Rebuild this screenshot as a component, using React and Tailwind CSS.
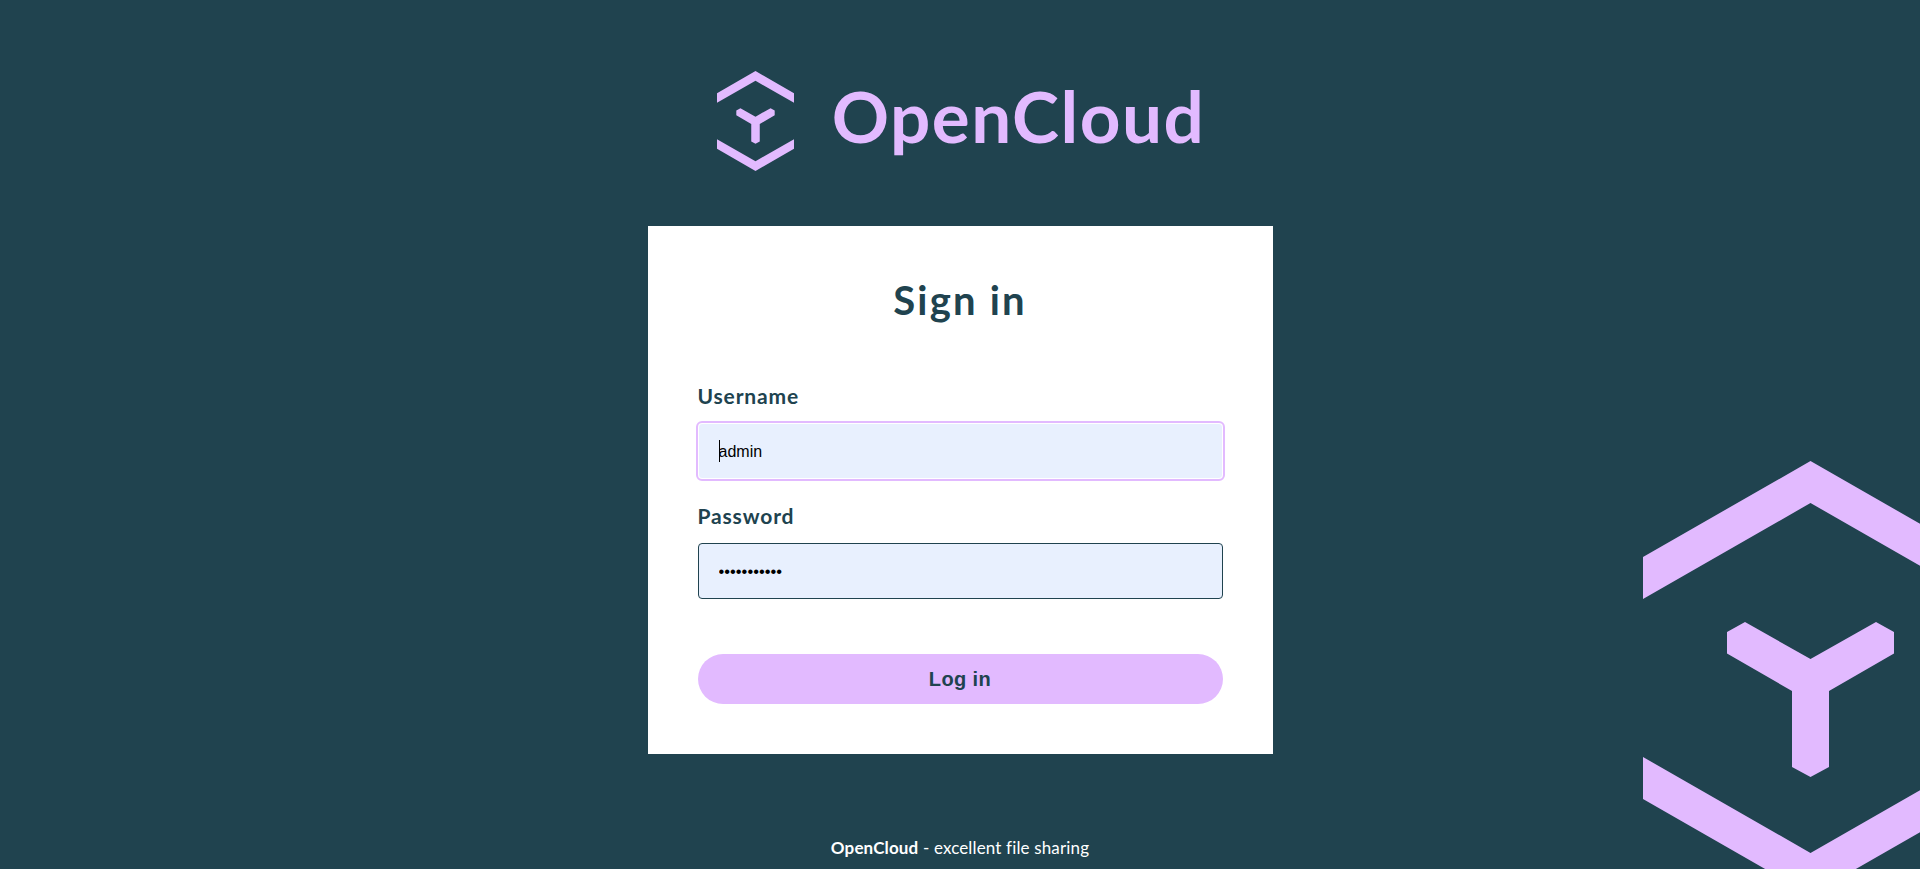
const LogoMark = ({ className }) => (
  <svg viewBox="0 0 335 434" className={className} fill="#e2baff">
    <polygon points="0,96 167.5,0 335,96 335,138 167.5,42 0,138" />
    <polygon points="84,171 102,161 167.5,198 233,161 251,171 251,192.5 186,230 186,306 167.5,316 149,306 149,230 84,192.5" />
    <polygon points="0,296 167.5,392 335,296 335,338 167.5,434 0,338" />
  </svg>
);

const labelClass = "block font-['Lato',sans-serif] font-bold text-[21px] leading-[24px] tracking-[0.85px] text-[#20434f]";

export default function App() {
  return (
    <div className="relative h-screen overflow-hidden bg-[#20434f] pt-[71px]">
      {/* big logo in the corner */}
      <LogoMark className="absolute left-[1643px] top-[461px] w-[335px] h-[434px]" />

      <div className="relative flex flex-col items-center">
        <div className="flex items-center gap-[38px] h-[100px] pl-[2px]">
          <LogoMark className="w-[77px] h-[100px]" />
          <span className="mb-[12px] font-['Lato',sans-serif] font-bold text-[71px] leading-none tracking-[1.5px] text-[#e2baff]">OpenCloud</span>
        </div>

        <div className="mt-[55px] w-[625px] h-[528px] bg-white px-[50px] pt-[49px]">
          <h1 className="text-center font-['Lato',sans-serif] font-bold text-[40px] leading-[50px] tracking-[2.2px] text-[#20434f]">Sign in</h1>

          <label className={labelClass + " mt-[59px]"}>Username</label>
          <div className="relative mt-[15px]">
            <input
              readOnly
              value="admin"
              className="w-full h-[56px] rounded-[4px] border border-white bg-[#e8f0fe] pl-[20px] pt-[1px] font-['Liberation_Sans',sans-serif] text-[16px] text-black outline-2 outline-[#e2baff]"
            />
            <span className="absolute left-[21px] top-[17px] w-px h-[22px] bg-black"></span>
          </div>

          <label className={labelClass + " mt-[25px]"}>Password</label>
          <input
            readOnly
            type="password"
            value="admin-admin"
            className="mt-[15px] w-full h-[56px] rounded-[4px] border border-[#20434f] bg-[#e8f0fe] pl-[20px] font-['Liberation_Sans',sans-serif] text-[16.5px] text-black outline-none"
          />

          <button className="mt-[55px] w-full h-[50px] rounded-[25px] bg-[#e2baff] font-['Liberation_Sans',sans-serif] font-bold text-[20px] tracking-[0.4px] text-[#20434f]">Log in</button>
        </div>

        <footer className="mt-[83px] font-['Lato',sans-serif] text-[17px] leading-[22px] tracking-[0.15px] text-white">
          <span className="font-bold">OpenCloud</span> - excellent file sharing
        </footer>
      </div>
    </div>
  );
}
